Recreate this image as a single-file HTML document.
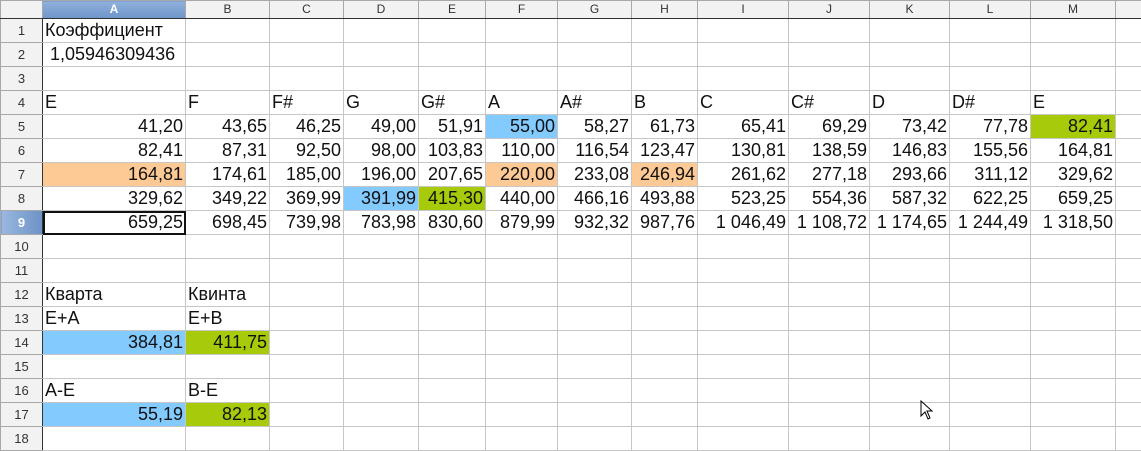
<!DOCTYPE html><html><head><meta charset="utf-8"><style>
body{margin:0;width:1141px;height:450px;overflow:hidden;background:#fff;font-family:"Liberation Sans","DejaVu Sans",sans-serif}
table{border-collapse:collapse;table-layout:fixed;position:absolute;left:0;top:0;width:1155px}
td{height:23px;border:1px solid #c6c6c6;padding:0 2px;font-size:18px;color:#111;white-space:nowrap;overflow:hidden;line-height:23px}
tr.h td{height:17px;background:#f2f2f2;border-color:#a8a8a8;border-bottom:1px solid #333;font-size:12px;text-align:center;color:#333;line-height:17px}
td.r{background:#f2f2f2;border-color:#a8a8a8;border-right:1px solid #333;font-size:13px;text-align:center;color:#333;padding:0}
td.n{text-align:right}
.b{background:#83caff}.o{background:#fdc994}.g{background:#a7cb0a}
tr.h td.sel{background:linear-gradient(#8fb1dd,#6f94c9);color:#fff;font-weight:bold}
td.r.sel{background:linear-gradient(90deg,#9ab8e0,#6d92c6);color:#fff;font-weight:bold}
td.cur{outline:2px solid #111;outline-offset:-2px}
</style></head><body>
<table>
<colgroup><col style="width:42px"><col style="width:143px"><col style="width:84px"><col style="width:74px"><col style="width:75px"><col style="width:67px"><col style="width:72px"><col style="width:74px"><col style="width:66px"><col style="width:91px"><col style="width:81px"><col style="width:80px"><col style="width:81px"><col style="width:85px"><col style="width:40px"></colgroup>
<tr class="h"><td></td><td class="sel">A</td><td>B</td><td>C</td><td>D</td><td>E</td><td>F</td><td>G</td><td>H</td><td>I</td><td>J</td><td>K</td><td>L</td><td>M</td><td></td></tr>
<tr><td class="r">1</td><td>Коэффициент</td><td></td><td></td><td></td><td></td><td></td><td></td><td></td><td></td><td></td><td></td><td></td><td></td><td></td></tr>
<tr><td class="r">2</td><td>&nbsp;1,05946309436</td><td></td><td></td><td></td><td></td><td></td><td></td><td></td><td></td><td></td><td></td><td></td><td></td><td></td></tr>
<tr><td class="r">3</td><td></td><td></td><td></td><td></td><td></td><td></td><td></td><td></td><td></td><td></td><td></td><td></td><td></td><td></td></tr>
<tr><td class="r">4</td><td>E</td><td>F</td><td>F#</td><td>G</td><td>G#</td><td>A</td><td>A#</td><td>B</td><td>C</td><td>C#</td><td>D</td><td>D#</td><td>E</td><td></td></tr>
<tr><td class="r">5</td><td class="n">41,20</td><td class="n">43,65</td><td class="n">46,25</td><td class="n">49,00</td><td class="n">51,91</td><td class="n b">55,00</td><td class="n">58,27</td><td class="n">61,73</td><td class="n">65,41</td><td class="n">69,29</td><td class="n">73,42</td><td class="n">77,78</td><td class="n g">82,41</td><td></td></tr>
<tr><td class="r">6</td><td class="n">82,41</td><td class="n">87,31</td><td class="n">92,50</td><td class="n">98,00</td><td class="n">103,83</td><td class="n">110,00</td><td class="n">116,54</td><td class="n">123,47</td><td class="n">130,81</td><td class="n">138,59</td><td class="n">146,83</td><td class="n">155,56</td><td class="n">164,81</td><td></td></tr>
<tr><td class="r">7</td><td class="n o">164,81</td><td class="n">174,61</td><td class="n">185,00</td><td class="n">196,00</td><td class="n">207,65</td><td class="n o">220,00</td><td class="n">233,08</td><td class="n o">246,94</td><td class="n">261,62</td><td class="n">277,18</td><td class="n">293,66</td><td class="n">311,12</td><td class="n">329,62</td><td></td></tr>
<tr><td class="r">8</td><td class="n">329,62</td><td class="n">349,22</td><td class="n">369,99</td><td class="n b">391,99</td><td class="n g">415,30</td><td class="n">440,00</td><td class="n">466,16</td><td class="n">493,88</td><td class="n">523,25</td><td class="n">554,36</td><td class="n">587,32</td><td class="n">622,25</td><td class="n">659,25</td><td></td></tr>
<tr><td class="r sel">9</td><td class="n cur">659,25</td><td class="n">698,45</td><td class="n">739,98</td><td class="n">783,98</td><td class="n">830,60</td><td class="n">879,99</td><td class="n">932,32</td><td class="n">987,76</td><td class="n">1 046,49</td><td class="n">1 108,72</td><td class="n">1 174,65</td><td class="n">1 244,49</td><td class="n">1 318,50</td><td></td></tr>
<tr><td class="r">10</td><td></td><td></td><td></td><td></td><td></td><td></td><td></td><td></td><td></td><td></td><td></td><td></td><td></td><td></td></tr>
<tr><td class="r">11</td><td></td><td></td><td></td><td></td><td></td><td></td><td></td><td></td><td></td><td></td><td></td><td></td><td></td><td></td></tr>
<tr><td class="r">12</td><td>Кварта</td><td>Квинта</td><td></td><td></td><td></td><td></td><td></td><td></td><td></td><td></td><td></td><td></td><td></td><td></td></tr>
<tr><td class="r">13</td><td>E+A</td><td>E+B</td><td></td><td></td><td></td><td></td><td></td><td></td><td></td><td></td><td></td><td></td><td></td><td></td></tr>
<tr><td class="r">14</td><td class="n b">384,81</td><td class="n g">411,75</td><td></td><td></td><td></td><td></td><td></td><td></td><td></td><td></td><td></td><td></td><td></td><td></td></tr>
<tr><td class="r">15</td><td></td><td></td><td></td><td></td><td></td><td></td><td></td><td></td><td></td><td></td><td></td><td></td><td></td><td></td></tr>
<tr><td class="r">16</td><td>A-E</td><td>B-E</td><td></td><td></td><td></td><td></td><td></td><td></td><td></td><td></td><td></td><td></td><td></td><td></td></tr>
<tr><td class="r">17</td><td class="n b">55,19</td><td class="n g">82,13</td><td></td><td></td><td></td><td></td><td></td><td></td><td></td><td></td><td></td><td></td><td></td><td></td></tr>
<tr><td class="r">18</td><td></td><td></td><td></td><td></td><td></td><td></td><td></td><td></td><td></td><td></td><td></td><td></td><td></td><td></td></tr>
</table>
<svg style="position:absolute;left:920px;top:400px" width="16" height="22" viewBox="0 0 16 22"><path d="M1 1 L1 16 L5 12 L8 19 L10 18 L7 11 L12 11 Z" fill="#fff" stroke="#000" stroke-width="1"/></svg>
</body></html>
